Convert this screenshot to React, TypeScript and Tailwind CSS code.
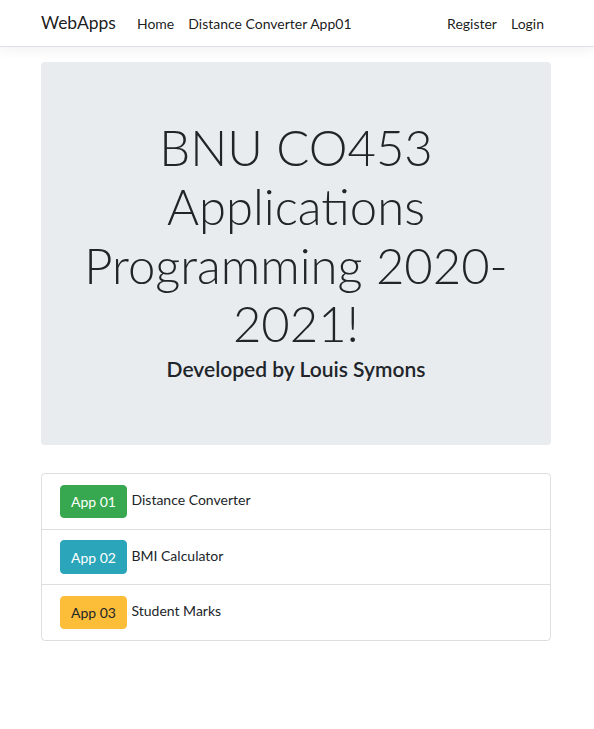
import React from "react";

export default function App() {
  const apps = [
    { label: "App 01", name: "Distance Converter", cls: "bg-[#37a84f] border-[#37a84f] text-white" },
    { label: "App 02", name: "BMI Calculator", cls: "bg-[#2aa5b9] border-[#2aa5b9] text-white" },
    { label: "App 03", name: "Student Marks", cls: "bg-[#fcbd38] border-[#fcbd38] text-[#212529]" },
  ];
  return (
    <div className="min-h-[729px] bg-white text-[#212529] text-[14px] leading-[1.5] font-['Lato',sans-serif]">
      <header className="h-[47px] border-b border-[#dee2e6] bg-white shadow-[0_3.5px_10.5px_rgba(0,0,0,0.05)]">
        <nav className="ml-[26px] flex h-[46px] w-[540px] items-center px-[15px]">
          <span className="mr-[14px] text-[17.5px] text-[rgba(0,0,0,0.9)]">WebApps</span>
          <span className="px-[7px] text-[rgba(0,0,0,0.9)]">Home</span>
          <span className="px-[7px] text-[rgba(0,0,0,0.9)]">Distance Converter App01</span>
          <span className="ml-auto px-[7px] text-[rgba(0,0,0,0.9)]">Register</span>
          <span className="pl-[7px] pr-[7px] text-[rgba(0,0,0,0.9)]">Login</span>
        </nav>
      </header>
      <main className="ml-[26px] w-[540px] px-[15px] pt-[15px]">
        <div className="rounded-[4px] bg-[#e9ecef] px-[28px] pt-[56px] pb-[64px] text-center">
          <h1 className="mb-[3px] text-[49px] font-light leading-[1.2]">
            BNU CO453 Applications Programming 2020-2021!
          </h1>
          <h4 className="text-[21px] font-semibold leading-[1.2]">Developed by Louis Symons</h4>
        </div>
        <ul className="mt-[28px] rounded-[4px] border border-[rgba(0,0,0,0.125)]">
          {apps.map((a, i) => (
            <li
              key={a.label}
              className={`flex items-center px-[17.5px] py-[10.5px] ${i > 0 ? "border-t border-[rgba(0,0,0,0.125)]" : ""}`}
            >
              <span className={`rounded-[4px] border px-[10.5px] py-[5.25px] leading-[1.5] ${a.cls}`}>{a.label}</span>
              <span className="ml-[4px] -mt-[4px]">{a.name}</span>
            </li>
          ))}
        </ul>
      </main>
    </div>
  );
}
